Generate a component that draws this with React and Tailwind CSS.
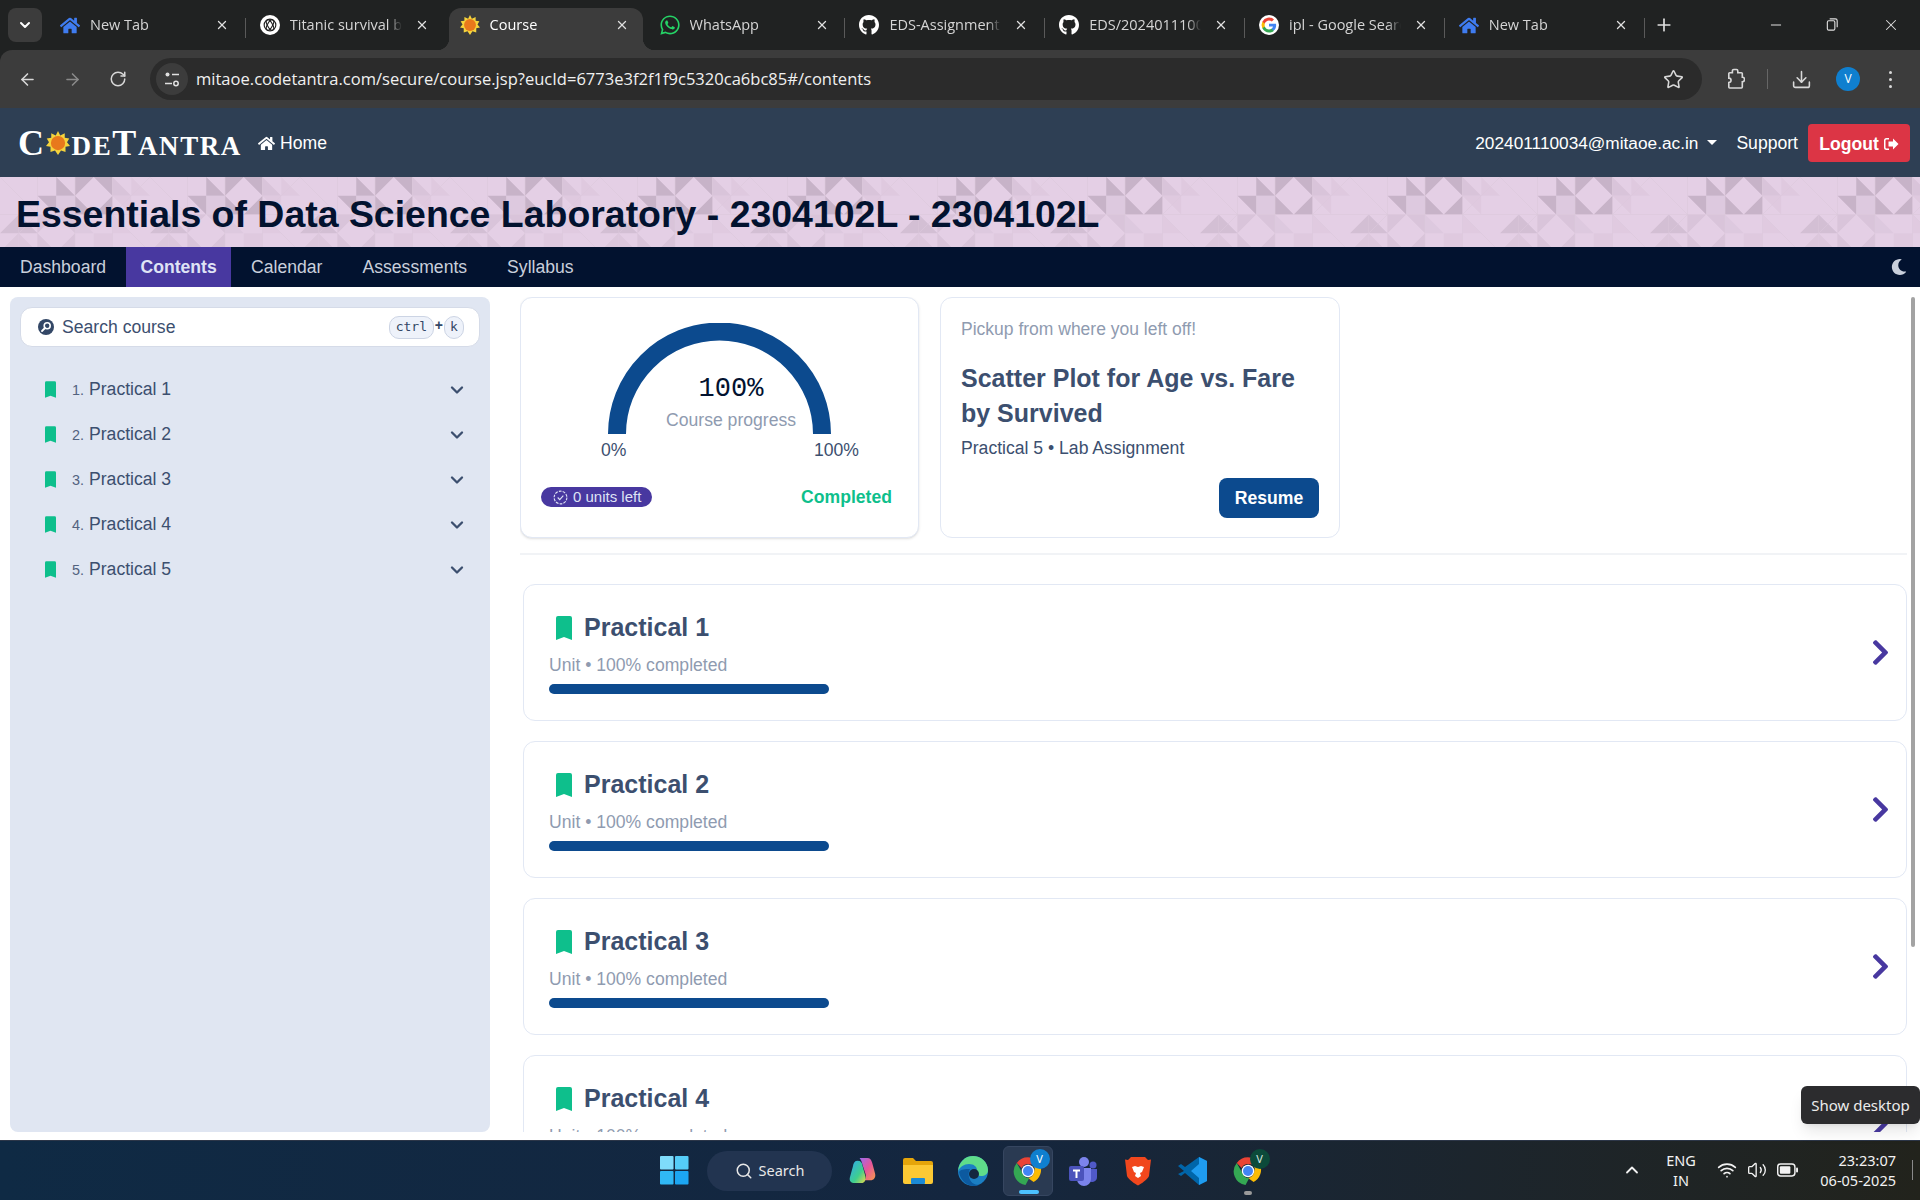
import React from 'react';
import { FaHome, FaGithub, FaWhatsapp, FaMoon, FaChevronRight } from 'react-icons/fa';
import { ChevronDown, ArrowLeft, ArrowRight, RotateCw, Star, Download, X, Plus, Minus, Search, ChevronUp, Wifi, Volume2 } from 'lucide-react';

const Bookmark = ({ className }) => (
  <svg viewBox="0 0 16 24" className={className} fill="#0ebf8c">
    <path d="M2 0h12a2 2 0 0 1 2 2v22l-8-3-8 3V2a2 2 0 0 1 2-2z" />
  </svg>
);

const Sun = ({ className }) => (
  <svg viewBox="0 0 32 32" className={className}>
    <polygon fill="#f5d33c" points="16,0 19,6 25,3 25,9 31,10 28,15 32,20 26,21 26,28 20,26 16,32 12,26 6,28 6,21 0,20 4,15 1,10 7,9 7,3 13,6" />
    <circle cx="16" cy="16" r="9.5" fill="#e8781c" />
  </svg>
);

const GoogleG = () => (
  <svg viewBox="0 0 24 24" className="w-5 h-5">
    <circle cx="12" cy="12" r="12" fill="#fff" />
    <path fill="#4285F4" d="M20.6 12.2c0-.6-.1-1.2-.2-1.8H12v3.4h4.8a4.1 4.1 0 0 1-1.8 2.7v2.2h2.9c1.7-1.6 2.7-3.8 2.7-6.5z" />
    <path fill="#34A853" d="M12 21c2.4 0 4.5-.8 5.900-2.200L15 16.500c-.8.5-1.800.9-3 .9-2.300 0-4.300-1.600-5-3.700H4v2.300A9 9 0 0 0 12 21z" />
    <path fill="#FBBC05" d="M7 13.700a5.400 5.400 0 0 1 0-3.400V8H4a9 9 0 0 0 0 8z" />
    <path fill="#EA4335" d="M12 6.600c1.300 0 2.500.5 3.400 1.300L18 5.400A9 9 0 0 0 4 8l3 2.300c.7-2.100 2.700-3.700 5-3.700z" />
  </svg>
);

const OpenAiIcon = () => (
  <svg viewBox="0 0 24 24" className="w-5 h-5">
    <circle cx="12" cy="12" r="12" fill="#fff" />
    <g fill="none" stroke="#222" strokeWidth="1.4">
      <circle cx="12" cy="12" r="7" />
      <ellipse cx="12" cy="12" rx="7" ry="3" transform="rotate(60 12 12)" />
      <ellipse cx="12" cy="12" rx="7" ry="3" transform="rotate(-60 12 12)" />
    </g>
  </svg>
);

const tabs = [
  { title: 'New Tab', icon: <FaHome className="w-[21px] h-[21px] text-[#3f7cf0]" />, sep: true },
  { title: 'Titanic survival b', icon: <OpenAiIcon />, sep: false },
  { title: 'Course', icon: <Sun className="w-5 h-5" />, active: true },
  { title: 'WhatsApp', icon: <FaWhatsapp className="w-[22px] h-[22px] text-[#25d366]" />, sep: true },
  { title: 'EDS-Assignment', icon: <FaGithub className="w-[22px] h-[22px] text-white" />, sep: true },
  { title: 'EDS/202401110034', icon: <FaGithub className="w-[22px] h-[22px] text-white" />, sep: true },
  { title: 'ipl - Google Search', icon: <GoogleG />, sep: true },
  { title: 'New Tab', icon: <FaHome className="w-[21px] h-[21px] text-[#3f7cf0]" />, sep: true },
];

const Tab = ({ tab }) => (
  <div className={`relative flex items-center h-[42px] self-end pb-2 ${tab.active ? 'w-[194px] mx-[3px] pl-[11px] bg-[#3c3c3c] rounded-t-xl' : 'w-[199.8px] pl-[14px]'}`}>
    {tab.active && <span className="absolute bottom-0 -left-3 w-3 h-3 bg-[radial-gradient(circle_at_0_0,transparent_12px,#3c3c3c_12.5px)]" />}
    {tab.active && <span className="absolute bottom-0 -right-3 w-3 h-3 bg-[radial-gradient(circle_at_100%_0,transparent_12px,#3c3c3c_12.5px)]" />}
    <span className="w-5 h-[22px] flex items-center justify-center shrink-0">{tab.icon}</span>
    <span className={`ml-[10px] w-[112px] overflow-hidden whitespace-nowrap text-[14.5px] [mask-image:linear-gradient(to_right,black_88%,transparent)] ${tab.active ? 'text-white' : 'text-[#d5d5d5]'}`}>{tab.title}</span>
    <X className="w-[14px] h-[14px] ml-[13px] text-[#e0e0e0]" strokeWidth={2.2} />
    {tab.sep && <span className="absolute right-0 top-[10px] w-px h-5 bg-[#5a5a5a]" />}
  </div>
);

const BannerPattern = () => (
  <svg className="absolute inset-0 w-full h-full">
    <defs>
      <pattern id="tiles" width="150" height="75" patternUnits="userSpaceOnUse">
        <g fill="#c7b3c8">
          <polygon points="75,0 93.75,0 75,18.75" />
          <polygon points="112.5,0 93.75,0 112.5,18.75" />
          <polygon points="75,37.5 75,18.75 93.75,37.5" />
          <polygon points="112.5,37.5 112.5,18.75 93.75,37.5" />
          <polygon points="37.5,18.75 56.25,18.75 56.25,37.5" />
          <polygon points="56.25,0 75,18.75 56.25,18.75" />
        </g>
        <g fill="#d9c4da">
          <polygon points="56.25,18.75 75,18.75 75,37.5 56.25,37.5" opacity="0.6" />
          <polygon points="112.5,0 131.25,18.75 112.5,18.75" />
          <polygon points="131.25,0 150,18.75 131.25,18.75" opacity="0.5" />
          <polygon points="112.5,18.75 131.25,18.75 131.25,37.5" opacity="0.5" />
          <polygon points="37.5,37.5 56.25,37.5 37.5,56.25" />
          <polygon points="75,37.5 56.25,37.5 75,56.25" />
          <polygon points="37.5,75 37.5,56.25 56.25,75" />
          <polygon points="75,75 75,56.25 56.25,75" />
          <polygon points="75,37.5 93.75,56.25 75,56.25" opacity="0.6" />
          <polygon points="93.75,56.25 112.5,56.25 112.5,75 93.75,75" opacity="0.5" />
          <polygon points="112.5,37.5 131.25,56.25 112.5,56.25" opacity="0.4" />
        </g>
        <g fill="#d3bfd4">
          <polygon points="0,56.25 18.75,37.5 18.75,56.25" />
          <polygon points="18.75,37.5 37.5,56.25 18.75,56.25" />
          <polygon points="0,75 18.75,56.25 18.75,75" opacity="0.5" />
          <polygon points="18.75,56.25 37.5,75 18.75,75" opacity="0.5" />
        </g>
        <path d="M0 37.5H150M37.5 0V75M75 0V75M112.5 0V75M0 0L37.5 37.5M150 0L112.5 37.5M112.5 37.5L150 75M37.5 37.5L0 75" stroke="#dbc7dc" strokeWidth="0.6" fill="none" />
      </pattern>
    </defs>
    <rect width="100%" height="100%" fill="url(#tiles)" />
  </svg>
);

const Logo = () => (
  <div className="w-[222px] shrink-0 flex items-baseline font-['Liberation_Serif',serif] font-bold text-white leading-none tracking-[1.6px]">
    <span className="text-[36px]">C</span>
    <Sun className="w-[24px] h-[26px] self-center shrink-0 mr-[2px]" />
    <span className="text-[27px]">DE</span>
    <span className="text-[36px]">T</span>
    <span className="text-[27px]">ANTRA</span>
  </div>
);

const practicals = ['Practical 1', 'Practical 2', 'Practical 3', 'Practical 4', 'Practical 5'];

const Sidebar = () => (
  <aside className="w-[480px] h-[835px] bg-[#e0e6f2] rounded-lg p-[10px]">
    <div className="h-10 bg-white rounded-xl border border-[#d5dbe8] flex items-center pl-[17px] pr-[15px]">
      <svg viewBox="0 0 16 16" className="w-4 h-4 shrink-0">
        <circle cx="8" cy="8" r="8" fill="#334766" />
        <circle cx="9.2" cy="6.8" r="3" fill="none" stroke="#fff" strokeWidth="1.6" />
        <path d="M7 9L4 12" stroke="#fff" strokeWidth="1.8" strokeLinecap="round" />
      </svg>
      <span className="ml-2 text-[17.6px] text-[#3c4f6f] flex-1">Search course</span>
      <kbd className="h-[23px] w-[45px] flex items-center justify-center rounded-[10px] bg-[#eef2fa] border border-[#ccd4e4] font-['DejaVu_Sans_Mono',monospace] text-[13px] text-[#334766]">ctrl</kbd>
      <span className="mx-[1px] text-[14px] font-bold text-[#334766] leading-none mb-1">+</span>
      <kbd className="h-[23px] w-[20px] flex items-center justify-center rounded-[10px] bg-[#eef2fa] border border-[#ccd4e4] font-['DejaVu_Sans_Mono',monospace] text-[13px] text-[#334766]">k</kbd>
    </div>
    <ul className="mt-5">
      {practicals.map((name, i) => (
        <li key={name} className="h-[45px] flex items-center pl-[25px] pr-[13px]">
          <Bookmark className="w-[11px] h-[17px] shrink-0" />
          <span className="ml-[16px] w-[17px] text-[14.4px] text-[#52627f] mt-[2px]">{i + 1}.</span>
          <span className="text-[17.6px] text-[#3c4f6f] flex-1">{name}</span>
          <ChevronDown className="w-[20px] h-[20px] text-[#3c4f6f]" strokeWidth={2.8} />
        </li>
      ))}
    </ul>
  </aside>
);

const ProgressCard = () => (
  <div className="w-[399px] h-[241px] bg-white rounded-xl border border-[#e2e8f4] shadow-sm px-[20px] pt-[25px] relative">
    <div className="relative w-[223px] h-[111px] mx-auto">
      <svg viewBox="0 0 223 111" className="w-[223px] h-[111px]">
        <path d="M9 111a102.5 102.5 0 0 1 205 0" fill="none" stroke="#0c4a8e" strokeWidth="18" />
      </svg>
      <div className="absolute left-[58px] top-[48px] w-[130px] text-center font-['Liberation_Mono',monospace] text-[27px] leading-[36px] text-[#02122f]">100%</div>
      <div className="absolute left-[58px] top-[85px] w-[130px] text-center text-[17.6px] leading-6 text-[#8f9bb0] whitespace-nowrap">Course progress</div>
    </div>
    <div className="flex justify-between w-[258px] ml-[60px] mt-[4px] text-[17.6px] leading-6 text-[#3c4f6f]">
      <span>0%</span>
      <span>100%</span>
    </div>
    <div className="flex items-center justify-between mt-[22px]">
      <span className="h-5 w-[111px] rounded-full bg-[#4838a0] text-[#dfe3f5] text-[15px] flex items-center pl-3 gap-[5px]">
        <svg viewBox="0 0 16 16" className="w-[15px] h-[15px] shrink-0" fill="none" stroke="#dfe3f5" strokeWidth="1.2">
          <circle cx="8" cy="8" r="6.8" strokeDasharray="3 1.2" />
          <path d="M5 8l2.2 2.2L11 6" />
        </svg>
        0 units left
      </span>
      <span className="text-[17.6px] font-bold text-[#0ebf8c] mr-[6px]">Completed</span>
    </div>
  </div>
);

const ResumeCard = () => (
  <div className="w-[400px] h-[241px] bg-white rounded-xl border border-[#e2e8f4] px-[20px] pt-[19px] ml-[21px]">
    <p className="text-[17.5px] leading-6 text-[#8f9bb0]">Pickup from where you left off!</p>
    <h3 className="mt-5 text-[25px] leading-[35px] font-bold text-[#3c4f6f]">Scatter Plot for Age vs. Fare by Survived</h3>
    <p className="mt-[5px] text-[17.6px] leading-6 text-[#3c4f6f]">Practical 5 • Lab Assignment</p>
    <div className="flex justify-end mt-[18px]">
      <button className="w-[100px] h-10 rounded-lg bg-[#0c4a8e] text-white font-bold text-[17.6px]">Resume</button>
    </div>
  </div>
);

const UnitCard = ({ name }) => (
  <div className="h-[137px] bg-white rounded-xl border border-[#e2e8f4] flex items-center justify-between pl-[25px] pr-[13px] mb-5 shrink-0">
    <div className="w-[300px]">
      <div className="flex items-center pl-[7px] -mt-px">
        <Bookmark className="w-[16px] h-[24px] shrink-0 mt-[2px]" />
        <span className="ml-3 text-[25px] leading-8 font-bold text-[#3c4f6f]">{name}</span>
      </div>
      <p className="mt-[10px] text-[17.6px] leading-6 text-[#8f9bb0]">Unit • 100% completed</p>
      <div className="mt-[7px] w-[280px] h-[10px] rounded-full bg-[#0c4a8e]" />
    </div>
    <FaChevronRight className="w-[25px] h-[29px] text-[#4838a0]" />
  </div>
);

const TaskIcon = ({ children, active, dot }) => (
  <div className={`relative w-[50px] h-[50px] mx-[2.5px] flex items-center justify-center rounded-md ${active ? 'bg-[#2a3a52] border border-[#364660]' : ''}`}>
    {children}
    {dot === 'blue' && <span className="absolute bottom-[1px] left-[15px] w-5 h-[4px] rounded-full bg-[#4cc2ff]" />}
    {dot === 'gray' && <span className="absolute bottom-[1px] left-[21px] w-2 h-[4px] rounded-full bg-[#9a9a9a]" />}
  </div>
);

const ChromeIcon = ({ badge, badgeBg }) => (
  <div className="relative w-[30px] h-[30px]">
    <svg viewBox="0 0 48 48" className="w-[30px] h-[30px]">
      <path fill="#EA4335" d="M24 2a22 22 0 0 1 19 11H24a11 11 0 0 0-10 6L6 11A22 22 0 0 1 24 2z" />
      <path fill="#FBBC05" d="M43 13a22 22 0 0 1-10 28.500L24 35a11 11 0 0 0 10-11 11 11 0 0 0-2-11z" />
      <path fill="#34A853" d="M6 11l9 16a11 11 0 0 0 11 8l-6 11.500A22 22 0 0 1 6 11z" />
      <circle cx="24" cy="24" r="10" fill="#fff" />
      <circle cx="24" cy="24" r="8" fill="#4285F4" />
    </svg>
    <span className={`absolute -top-[7px] -right-[7px] w-5 h-5 rounded-full text-[11px] leading-5 text-center font-['Noto_Sans',sans-serif] ${badgeBg}`}>{badge}</span>
  </div>
);

const Taskbar = () => (
  <div className="h-[60px] shrink-0 grid grid-cols-[1fr_auto_1fr] items-center bg-gradient-to-r from-[#0f2a44] via-[#14263f] to-[#22231c] border-t border-[#2c3648] text-white font-['Noto_Sans',sans-serif]">
    <div />
    <div className="flex items-center pl-[15px]">
      <svg viewBox="0 0 30 30" className="w-[29px] h-[29px]">
        <rect width="14" height="14" rx="1" fill="#7fdcfb" />
        <rect x="15.500" width="14" height="14" rx="1" fill="#55cdf8" />
        <rect y="15.500" width="14" height="14" rx="1" fill="#30b8f5" />
        <rect x="15.500" y="15.500" width="14" height="14" rx="1" fill="#1ca6f2" />
      </svg>
      <div className="ml-[18px] mr-[3px] w-[125px] h-10 rounded-full bg-[#223450] flex items-center justify-center gap-[6px] text-[14.5px] text-[#e8e8e8]">
        <Search className="w-[18px] h-[18px]" strokeWidth={2} />
        Search
      </div>
      <TaskIcon>
        <svg viewBox="0 0 30 30" className="w-[29px] h-[29px]">
          <defs>
            <linearGradient id="copilotLeft" x1="0" y1="0" x2="1" y2="1">
              <stop offset="0" stopColor="#2fa8f0" />
              <stop offset="0.6" stopColor="#3ecf8e" />
              <stop offset="1" stopColor="#e8d84a" />
            </linearGradient>
            <linearGradient id="copilotRight" x1="0" y1="0" x2="1" y2="1">
              <stop offset="0" stopColor="#9a6cf0" />
              <stop offset="0.5" stopColor="#e6569a" />
              <stop offset="1" stopColor="#f59a4a" />
            </linearGradient>
          </defs>
          <path fill="url(#copilotRight)" d="M12 2h8c3 0 4 2 5 5l3 11c1 4-1 7-5 7h-6c2-2 2-4 1-7l-3-9c-.6-3-1.500-5-3-7z" />
          <path fill="url(#copilotLeft)" d="M10 5c3 0 4.500 2 5 5l3 11c1 4-1 7-4 7H7c-4 0-6-2-5-6l3-11c.7-4 2-6 5-6z" />
        </svg>
      </TaskIcon>
      <TaskIcon>
        <svg viewBox="0 0 30 30" className="w-[30px] h-[30px]">
          <path fill="#e5a50a" d="M0 4a2 2 0 0 1 2-2h8l3 3h15a2 2 0 0 1 2 2v4H0z" />
          <path fill="#fcc934" d="M0 9h30v17a2 2 0 0 1-2 2H2a2 2 0 0 1-2-2z" />
          <rect x="8" y="22" width="14" height="6" rx="1" fill="#1b8ad6" />
        </svg>
      </TaskIcon>
      <TaskIcon>
        <svg viewBox="0 0 30 30" className="w-[30px] h-[30px]">
          <circle cx="15" cy="15" r="15" fill="#1b7fc4" />
          <path fill="#5fdc8a" d="M15 0c8 0 15 6 15 14 0 4-3 6-7 6-3 0-5-1-5-3 0-1 1-1 1-3 0-3-3-6-8-6-5 0-9 3-11 7C1 6 7 0 15 0z" />
          <circle cx="16" cy="18" r="5" fill="#14263f" />
          <path fill="#0c5aa0" d="M1 16c1 7 7 14 15 14 2 0 4-.5 5-1-5 0-9-3-10-8-1-3 0-6 1-8-5 0-9 0-11 3z" />
        </svg>
      </TaskIcon>
      <TaskIcon active dot="blue">
        <ChromeIcon badge="V" badgeBg="bg-[#0f7fcf] text-white" />
      </TaskIcon>
      <TaskIcon>
        <svg viewBox="0 0 30 30" className="w-[30px] h-[30px]">
          <circle cx="16" cy="6" r="5" fill="#7b83eb" />
          <circle cx="25" cy="9" r="3.500" fill="#5059c9" />
          <path fill="#5059c9" d="M20 13h9v8a5 5 0 0 1-9 3z" />
          <path fill="#7b83eb" d="M9 12h14v11a7 7 0 0 1-14 0z" />
          <rect x="1" y="10" width="15" height="15" rx="2" fill="#4b53bc" />
          <path fill="#fff" d="M5 13.500h7v2H9.500V22h-2v-6.500H5z" />
        </svg>
      </TaskIcon>
      <TaskIcon>
        <svg viewBox="0 0 30 30" className="w-[30px] h-[30px]">
          <path fill="#f1471d" d="M8 1h14l3 3 3-.5L26 20c-1 3-8 8-11 9.500C12 28 5 23 4 20L2 3.500 5 4z" />
          <path fill="#fff" d="M9 11l3-1 3 1 3-1 3 1-2 5-2 1 1 3-3 2-3-2 1-3-2-1z" />
        </svg>
      </TaskIcon>
      <TaskIcon>
        <svg viewBox="0 0 30 30" className="w-[30px] h-[30px]">
          <path fill="#0065a9" d="M21 1l8 4v20l-8 4L7 17l-4 3-3-2 6-3-6-5 3-2 4 3z" />
          <path fill="#1f9cf0" d="M21 1l8 4v20l-8 4zM21 8l-8 7 8 7z" fillRule="evenodd" />
        </svg>
      </TaskIcon>
      <TaskIcon dot="gray">
        <ChromeIcon badge="V" badgeBg="bg-[#0c4a3a] text-[#d8e8e0]" />
      </TaskIcon>
    </div>
    <div className="flex items-center justify-end pr-[7px] pb-[2px] text-[14.5px] text-[#f2f2f2]">
      <ChevronUp className="w-[20px] h-[20px] mr-[19px]" strokeWidth={2.2} />
      <div className="text-center leading-5 w-[40px] mr-[16px]">ENG<br />IN</div>
      <Wifi className="w-5 h-5" strokeWidth={2} />
      <Volume2 className="w-5 h-5 ml-[10px]" strokeWidth={1.6} />
      <svg viewBox="0 0 22 14" className="w-[21px] h-[14px] ml-[10px] mr-[20px]" fill="none">
        <rect x="0.75" y="0.75" width="18" height="12.500" rx="3" stroke="#f2f2f2" strokeWidth="1.5" />
        <rect x="3" y="3" width="11" height="8" rx="1" fill="#f2f2f2" />
        <rect x="20" y="4.500" width="2" height="5" rx="1" fill="#f2f2f2" />
      </svg>
      <div className="text-right leading-5 w-[78px]">23:23:07<br />06-05-2025</div>
      <span className="ml-[16px] w-px h-5 bg-[#8a8a8a]" />
    </div>
  </div>
);

export default function App() {
  return (
    <div className="relative w-[1920px] h-[1200px] overflow-hidden bg-white flex flex-col font-['Liberation_Sans',Arial,sans-serif]">
      {/* Browser chrome */}
      <div className="bg-[#202222] shrink-0">
        <div className="h-[50px] flex font-['Open_Sans',sans-serif] pl-[8px]">
          <div className="w-[34px] h-[34px] mt-[8px] mr-[4px] rounded-lg bg-[#3c3c3c] flex items-center justify-center">
            <ChevronDown className="w-4 h-4 text-white" strokeWidth={3} />
          </div>
          {tabs.map((tab, i) => <Tab key={i} tab={tab} />)}
          <Plus className="w-[20px] h-[20px] ml-[9px] mt-[15px] text-[#e0e0e0]" strokeWidth={2} />
          <div className="ml-auto flex text-[#e0e0e0]">
            <Minus className="w-4 h-4 mt-[17px] mr-[41px]" strokeWidth={1.5} />
            <svg viewBox="0 0 16 16" className="w-[15px] h-[15px] mt-[17px] mr-[42px]" fill="none" stroke="currentColor" strokeWidth="1.2">
              <rect x="2.500" y="4" width="8" height="10" rx="1.500" />
              <path d="M5 2h6a2 2 0 0 1 2 2v7" />
            </svg>
            <X className="w-[18px] h-[18px] mt-[16px] mr-[20px]" strokeWidth={1.4} />
          </div>
        </div>
        <div className="h-[58px] bg-[#3c3c3c] rounded-tl-xl flex items-center pl-[18px] pr-[20px] text-[#d8d8d8] font-['Open_Sans',sans-serif]">
          <ArrowLeft className="w-[19px] h-[19px]" strokeWidth={2} />
          <ArrowRight className="w-[19px] h-[19px] ml-[26px] text-[#8a8a8a]" strokeWidth={2} />
          <RotateCw className="w-[18px] h-[18px] ml-[27px]" strokeWidth={2} />
          <div className="ml-[23px] w-[1552px] h-[42px] rounded-full bg-[#2b2b2b] flex items-center pl-[6px] pr-[18px]">
            <span className="w-8 h-8 rounded-full bg-[#3c3c3c] flex items-center justify-center">
              <svg viewBox="0 0 16 16" className="w-4 h-4" fill="none" stroke="#e0e0e0" strokeWidth="1.5">
                <circle cx="3.500" cy="3.500" r="2" fill="#e0e0e0" stroke="none" />
                <path d="M8 3.500h7M1 12.500h7" />
                <circle cx="12" cy="12.500" r="2.200" />
              </svg>
            </span>
            <span className="ml-2 flex-1 text-[16.55px] text-[#f0f0f0] whitespace-nowrap">mitaoe.codetantra.com/secure/course.jsp?eucId=6773e3f2f1f9c5320ca6bc85#/contents</span>
            <Star className="w-[21px] h-[21px]" strokeWidth={1.8} />
          </div>
          <svg viewBox="0 0 20 24" className="w-[18px] h-[22px] ml-[25px]" fill="none" stroke="#d8d8d8" strokeWidth="1.8">
            <path d="M3 5h3V3a1.500 1.500 0 0 1 1.500-1.500h3A1.500 1.500 0 0 1 12 3v2h4a1 1 0 0 1 1 1v4a2.500 2.500 0 0 1 0 5v6a1 1 0 0 1-1 1H3a1 1 0 0 1-1-1v-5a2.500 2.500 0 0 0 0-5V6a1 1 0 0 1 1-1z" />
          </svg>
          <span className="ml-[22px] w-px h-5 bg-[#666]" />
          <Download className="w-[21px] h-[21px] ml-[23px]" strokeWidth={1.8} />
          <span className="ml-[24px] w-6 h-6 rounded-full bg-[#0f7fcf] text-white text-[12px] flex items-center justify-center">V</span>
          <span className="ml-[29px] flex flex-col gap-[4px]">
            <span className="w-[3px] h-[3px] rounded-full bg-[#d8d8d8]" />
            <span className="w-[3px] h-[3px] rounded-full bg-[#d8d8d8]" />
            <span className="w-[3px] h-[3px] rounded-full bg-[#d8d8d8]" />
          </span>
        </div>
      </div>

      {/* Site header */}
      <header className="h-[69px] shrink-0 bg-[#2e3f54] flex items-center pl-[18px] pr-[10px] text-white">
        <Logo />
        <FaHome className="w-[17px] h-[17px] ml-[18px] mt-[2px]" />
        <span className="ml-[5px] text-[17.6px] mt-[2px]">Home</span>
        <span className="ml-auto text-[17.25px] mt-[2px]">202401110034@mitaoe.ac.in</span>
        <span className="ml-[9px] w-0 h-0 border-x-[5px] border-x-transparent border-t-[5px] border-t-white" />
        <span className="ml-[19px] text-[17.6px] mt-[2px]">Support</span>
        <button className="ml-[10px] w-[102px] h-[38px] pt-[3px] rounded bg-[#dc3545] text-[17.6px] font-bold flex items-center justify-center gap-[4px]">
          Logout
          <svg viewBox="0 0 16 16" className="w-4 h-4" fill="#fff">
            <path d="M6 2H3.500A2.500 2.500 0 0 0 1 4.500v7A2.500 2.500 0 0 0 3.500 14H6v-1.500H3.500a1 1 0 0 1-1-1v-7a1 1 0 0 1 1-1H6z" />
            <path d="M10 2.500L15.500 8 10 13.500V10.500H5.500v-5H10z" />
          </svg>
        </button>
      </header>

      {/* Course banner */}
      <div className="relative h-[70px] shrink-0 bg-[#e4cfe5] flex items-center pl-4 pt-[4px] overflow-hidden">
        <BannerPattern />
        <h1 className="relative text-[37.45px] font-bold text-[#02122f] whitespace-nowrap">Essentials of Data Science Laboratory - 2304102L - 2304102L</h1>
      </div>

      {/* Course nav */}
      <nav className="h-10 shrink-0 bg-[#02122f] flex items-center text-[17.6px] text-[#c9cfdc]">
        <span className="px-5">Dashboard</span>
        <span className="h-full w-[105px] flex items-center justify-center bg-[#4838a0] font-bold text-[#dfe3f5]">Contents</span>
        <span className="px-5">Calendar</span>
        <span className="px-5">Assessments</span>
        <span className="px-5">Syllabus</span>
        <FaMoon className="ml-auto mr-[13px] w-4 h-4 text-[#c9cfdc]" />
      </nav>

      {/* Body */}
      <div className="flex-1 min-h-0 flex pt-[10px] pl-[10px]">
        <Sidebar />
        <main className="ml-[30px] w-[1387px] h-[835px] overflow-hidden">
          <div className="flex">
            <ProgressCard />
            <ResumeCard />
          </div>
          <div className="h-[2px] mt-[15px] bg-[#f1f3f6]" />
          <div className="mt-[29px] ml-[3px] flex flex-col">
            {practicals.slice(0, 4).map(name => <UnitCard key={name} name={name} />)}
          </div>
        </main>
        <div className="ml-[4px] w-[4px] h-[650px] rounded bg-[#a3a3a3]" />
      </div>

      <Taskbar />

      <div className="absolute left-[1801px] top-[1086px] w-[119px] h-[38px] rounded-md bg-[#2c2c2e] shadow-lg text-[#ececec] text-[15px] flex items-center justify-center font-['Noto_Sans',sans-serif]">Show desktop</div>
    </div>
  );
}
